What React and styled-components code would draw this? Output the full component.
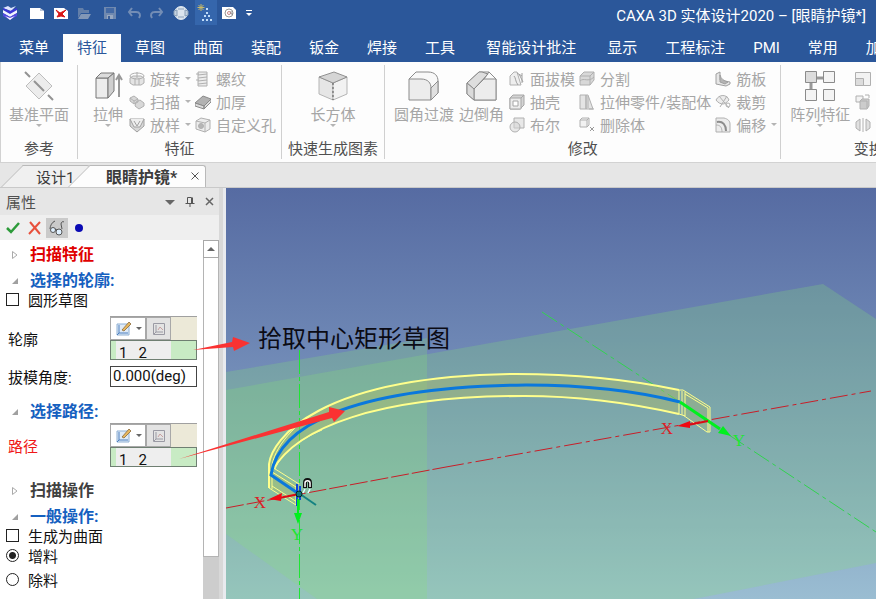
import { useState } from 'react';
import styled, { createGlobalStyle, css } from 'styled-components';

const GlobalStyle = createGlobalStyle`
    * { box-sizing: border-box; }
    html, body { margin: 0; height: 100%; overflow: hidden; }
    body, button, input {
        font-family: Roboto, "Noto Sans CJK SC", sans-serif;
        font-size: 15px;
    }
    button { padding: 0; border: none; background: none; color: inherit; white-space: nowrap; }
    svg { display: block; flex: none; }
`;

const Page = styled.div`
    display: flex;
    flex-direction: column;
    height: 100vh;
    background-color: #e6e6e6;
`;

const TitleBar = styled.header`
    display: flex;
    justify-content: space-between;
    height: 34px;
    padding: 0 10px 0 0;
    background-color: #2b579a;
    color: #fff;
`;

const QuickAccess = styled.div`
    display: flex;
    height: 25px;
`;

const QuickButton = styled.button`
    display: flex;
    align-items: center;
    justify-content: center;
    width: ${props => props.$width || 24}px;
    background-color: ${props => (props.$active ? '#3566ac' : 'transparent')};
`;

const WindowTitle = styled.h1`
    margin: 0;
    font-size: 15px;
    font-weight: 400;
    line-height: 32px;
    white-space: nowrap;
`;

const Menu = styled.nav`
    display: flex;
    height: 28px;
    padding-left: 5px;
    overflow: hidden;
    background-color: #2b579a;
    color: #fff;
`;

const MenuTab = styled.button`
    flex: none;
    padding: 0 ${props => (props.$wide ? 17 : 14)}px;
    line-height: 28px;
    ${props => props.$active && css`
        background-color: #fdfdfd;
        color: #2b579a;
    `}
`;

const Ribbon = styled.div`
    display: flex;
    flex: none;
    height: 101px;
    overflow: hidden;
    background-color: #fdfdfd;
    border-bottom: 1px solid #d2d2d2;
    border-left: 1px solid #d2d2d2;
`;

const Group = styled.section`
    display: flex;
    flex: none;
    flex-direction: column;
    min-width: ${props => props.$width}px;
    margin: 3px 0;
    border-right: 1px solid #d0d0d0;
`;

const GroupTools = styled.div`
    display: flex;
    justify-content: ${props => (props.$start ? 'flex-start' : 'center')};
    gap: 5px;
    height: 75px;
    padding: 2px 4px 0 ${props => props.$start || 4}px;
`;

const GroupName = styled.h2`
    margin: 0;
    color: #505050;
    font-size: 15px;
    font-weight: 400;
    line-height: 20px;
    text-align: center;
    white-space: nowrap;
`;

const BigTool = styled.button`
    display: flex;
    flex-direction: column;
    align-items: center;
    color: #a6a6a6;
    line-height: 18px;
    svg { margin: 3px 0 4px; }
`;

const ToolColumn = styled.div`
    display: flex;
    flex-direction: column;
    margin-right: -1px;
`;

const SmallTool = styled.button`
    display: flex;
    align-items: center;
    gap: 5px;
    height: 23px;
    color: #a6a6a6;
`;

const Caret = styled.span`
    border: 3px solid transparent;
    border-top-color: ${props => props.$color || '#b4b4b4'};
    border-bottom: none;
`;

const DocTabs = styled.div`
    display: flex;
    flex: none;
    align-items: flex-end;
    height: 25px;
    border-bottom: 1px solid #c9c9c9;
`;

const DocTab = styled.div`
    position: relative;
    display: flex;
    align-items: center;
    gap: 14px;
    height: 22px;
    margin-left: ${props => (props.$active ? -22 : 1)}px;
    padding: 0 6px 0 ${props => (props.$active ? 38 : 35)}px;
    width: ${props => (props.$active ? 138 : 89)}px;
    color: #3c3c3c;
    font-size: ${props => (props.$active ? 16 : 15)}px;
    font-weight: ${props => (props.$active ? 700 : 400)};
    white-space: nowrap;

    &::before, &::after {
        content: '';
        position: absolute;
        inset: 0;
        background-color: ${props => (props.$active ? '#fdfdfd' : '#f0f0f0')};
        border: 1px solid #b9b9b9;
        border-bottom: none;
    }
    &::before {
        right: 30px;
        border-right: none;
        transform: skewX(-45deg);
        transform-origin: bottom left;
    }
    &::after {
        left: 40px;
        border-left: none;
        border-radius: 0 3px 0 0;
    }
    > * { position: relative; z-index: 1; }
`;

const Workspace = styled.main`
    position: relative;
    display: flex;
    flex: 1;
    min-height: 0;
`;

const Panel = styled.aside`
    display: flex;
    flex: none;
    flex-direction: column;
    width: 219px;
`;

const PanelHeader = styled.div`
    display: flex;
    align-items: center;
    gap: 10px;
    height: 27px;
    padding: 0 4px 0 6px;
    color: #505050;
    h2 {
        flex: 1;
        margin: 0;
        font-size: 15px;
        font-weight: 400;
    }
`;

const PanelActions = styled.div`
    display: flex;
    align-items: center;
    height: 25px;
    padding-left: 2px;
    background-color: #efefef;
`;

const ActionButton = styled.button`
    display: flex;
    align-items: center;
    justify-content: center;
    width: 22px;
    height: 20px;
    background-color: ${props => (props.$active ? '#cacaca' : 'transparent')};
`;

const PanelBody = styled.div`
    display: flex;
    flex: 1;
    min-height: 0;
    background-color: #fff;
`;

const Properties = styled.form`
    flex: 1;
    padding-top: 1px;
    overflow: hidden;
`;

const Section = styled.section`
    margin-bottom: ${props => (props.$open ? 7 : 2)}px;
`;

const SectionHeader = styled.button`
    display: flex;
    align-items: center;
    gap: 11px;
    height: 24px;
    padding: 4px 0 0 11px;
    color: ${props => props.$color};
    font-size: 16px;
    font-weight: 700;
    line-height: 20px;
`;

const CheckRow = styled.label`
    display: flex;
    align-items: center;
    gap: 9px;
    height: ${props => props.$height || 16}px;
    padding-left: 6px;
    color: #111;

    input {
        appearance: none;
        width: 13px;
        height: 13px;
        margin: 0;
        border: 1px solid #222;
        background-color: #fff;
    }
    input[type='radio'] { border-radius: 50%; }
    input[type='radio']:checked {
        background-image: radial-gradient(circle, #222 3px, transparent 4px);
    }
`;

const Fields = styled.div`
    padding-top: ${props => (props.$spaced ? 8 : 0)}px;
`;

const FieldRow = styled.div`
    display: flex;
    align-items: center;
    justify-content: space-between;
    height: ${props => props.$height}px;
    padding: 0 6px 2px 8px;
    color: ${props => (props.$missing ? '#f01818' : '#111')};
    input {
        width: 87px;
        height: 21px;
        padding: 0 2px;
        border: 1px solid #444;
        color: #111;
    }
`;

const Picker = styled.div`
    width: 87px;
    color: #111;
`;

const PickerTools = styled.div`
    display: flex;
    height: 24px;
    background-color: #ece9d8;
    border-top: 1px solid #a0a0a0;
`;

const PickerButton = styled.button`
    display: flex;
    align-items: center;
    justify-content: center;
    gap: 5px;
    width: ${props => (props.$plain ? 25 : 36)}px;
    background-color: ${props => (props.$plain ? '#e3e3e3' : '#fff')};
    border: 1px solid #a8a8a8;
`;

const PickerList = styled.div`
    height: 20px;
    padding: 0 25px 0 5px;
    overflow: hidden;
    background-color: #c8ebc4;
    border: 1px solid #6f7f72;
    span {
        display: block;
        padding: 4px 0 0 3px;
        background-color: #eee;
        line-height: 17px;
        white-space: pre;
    }
`;

const ScrollTrack = styled.div`
    display: flex;
    flex-direction: column;
    width: 16px;
    padding-bottom: 42px;
    background-color: #cdcdcd;
`;

const ScrollButton = styled.button`
    display: flex;
    align-items: center;
    justify-content: center;
    height: 18px;
    background-color: #fff;
    border: 1px solid #a8a8a8;
`;

const ScrollThumb = styled.div`
    flex: 1;
    background-color: #fff;
    border: 1px solid #b4b4b4;
    border-top: none;
`;

const Splitter = styled.div`
    width: 7px;
    background-color: #d8d8d8;
    border-right: 3px solid #e8eaee;
`;

const Viewport = styled.div`
    flex: 1;
    min-width: 0;
    background: linear-gradient(#566ba2, #6d86b4 37%, #84a2c3 70%, #9abdd2);
    svg { width: 100%; height: 100%; }
`;

const Pointers = styled.svg`
    position: absolute;
    top: 0;
    left: 0;
    pointer-events: none;
`;

const Note = styled.p`
    position: absolute;
    top: 136px;
    left: 258px;
    margin: 0;
    color: #0b0b14;
    font-size: 24px;
    line-height: 30px;
    white-space: nowrap;
`;

const Svg = ({ size = 16, children, ...rest }) => (
    <svg width={size} height={size} viewBox={`0 0 ${size} ${size}`} fill="none" stroke="#b0b0b0" {...rest}>
        {children}
    </svg>
);

const quickIcons = [
    {
        name: 'CAXA', width: 20, icon: (
            <Svg stroke="none">
                <path d="M1 3l5-2 3 2 5-2-5 5z" fill="#dfe4ff" />
                <path d="M1 3l7 3 7-3v2l-7 4-7-4z" fill="#3d35d8" />
                <path d="M1 5l7 4 7-4v3l-7 4-7-4z" fill="#f2f4ff" />
                <path d="M1 8l7 4 7-4v3l-7 4-7-4z" fill="#5148e0" />
                <path d="M3 11l5 2 5-2-5 4z" fill="#fff" />
            </Svg>
        ),
    },
    { name: '新建', width: 33, icon: <Svg stroke="none"><path d="M1 3h10l4 3v8H1z" fill="#fff" /><path d="M11 3v3h4z" fill="#b8c4d8" /></Svg> },
    {
        name: '关闭', width: 16, icon: (
            <Svg stroke="none">
                <path d="M1 3h10l4 3v8H1z" fill="#fff" />
                <path d="M3 5l4 3 6-3-4 4 3 3-4-1-4 1 2-3z" fill="#d81818" stroke="#d81818" />
            </Svg>
        ),
    },
    { name: '打开', width: 30, icon: <Svg stroke="none"><path d="M2 3h5l1 2h5v3H5l-3 5z" fill="#637fa9" /><path d="M5 9h10l-3 5H2z" fill="#8297b6" /></Svg> },
    { name: '保存', width: 22, icon: <Svg stroke="none"><path d="M2 2h12v12H2z" fill="#7089af" /><path d="M4 3h8v5H4z" fill="#4369a4" /><path d="M5 10h6v4H5z" fill="#98a8c0" /><path d="M6 11h2v3H6z" fill="#3b5f99" /></Svg> },
    { name: '撤销', width: 26, icon: <Svg stroke="#738db5" strokeWidth="2"><path d="M6 3L3 7l3 4M3 7h7c4 0 5 3 3 6" /></Svg> },
    { name: '重做', width: 20, icon: <Svg stroke="#738db5" strokeWidth="2"><path d="M10 3l3 4-3 4M13 7H6c-4 0-5 3-3 6" /></Svg> },
    {
        name: '显示设置', width: 28, icon: (
            <Svg stroke="#8aa0b8">
                <circle cx="8" cy="8" r="6.5" fill="#dce5ee" stroke="#dce5ee" />
                <path d="M1 6l3-1v6l-3-1zM15 6l-3-1v6l3-1zM5 4h6M5 12h6" fill="#c4d2e0" />
            </Svg>
        ),
    },
    {
        name: '三维球', width: 22, active: true, icon: (
            <Svg size={18} stroke="none">
                <path d="M4 0v7M.5 3.5h7M1.5 1l5 5M6.500 1l-5 5" stroke="#c8b968" />
                <path d="M9 4h2v2H9zM9 8h2v2H9zM7 11h2v2H7zM11 11h2v2h-2zM5 15h2v2H5zM9 15h2v2H9zM13 15h2v2h-2z" fill="#c0dcf8" />
            </Svg>
        ),
    },
    {
        name: '零件属性', width: 24, icon: (
            <Svg stroke="#7a7a7a">
                <path d="M1 2h11l3 3v9H1z" fill="#fff" stroke="none" />
                <circle cx="8" cy="8" r="4" strokeWidth=".8" />
                <circle cx="8" cy="8" r="1.5" stroke="#c88" />
                <path d="M10 6v3h2" strokeWidth=".8" />
            </Svg>
        ),
    },
    { name: '更多', width: 16, icon: <Svg size={8} stroke="#fff"><path d="M1 1.500h6" /><path d="M1 4h6L4 7z" fill="#fff" stroke="none" /></Svg> },
];

const menuItems = ['菜单', '特征', '草图', '曲面', '装配', '钣金', '焊接', '工具', '智能设计批注', '显示', '工程标注', 'PMI', '常用', '加载应用程序'];

const bigIcons = {
    plane: (
        <Svg size={32} stroke="#bdbdbd">
            <path d="M16 3l13 13-13 13L3 16z" fill="#ececec" />
            <path d="M11 11l10 10M2 2l5 5M25 25l5 5" stroke="#939393" strokeWidth="2" />
        </Svg>
    ),
    extrude: (
        <Svg size={32} stroke="#777">
            <path d="M4 8h12v20H4z" fill="#ececec" />
            <path d="M4 8l5-5h13l-6 5z" fill="#dcdcdc" />
            <path d="M16 8l6-5v18l-6 7z" fill="#cfcfcf" />
            <path d="M27 27V6M24 10l3-5 3 5" stroke="#999" strokeWidth="2" />
        </Svg>
    ),
    box: (
        <Svg size={32} stroke="#b5b5b5">
            <path d="M2 7l14 6v17L2 24z" fill="#e6e6e6" />
            <path d="M30 7l-14 6v17l14-6z" fill="#f2f2f2" />
            <path d="M2 7l15-5 13 5-14 6z" fill="#d5d5d5" stroke="#909090" />
            <path d="M16 13v17" stroke="#555" strokeDasharray="2 2" />
        </Svg>
    ),
    fillet: (
        <Svg size={32} stroke="#8b8b8b">
            <path d="M1 9l7-7h12c7 0 10 4 10 9v12l-7 7" fill="#f8f8f8" />
            <path d="M1 30V9h12c7 0 10 4 10 9v12z" fill="#ececec" />
            <path d="M23 18l7-7v12l-7 7z" fill="#e0e0e0" />
        </Svg>
    ),
    chamfer: (
        <Svg size={32} stroke="#8b8b8b">
            <path d="M1 13L13 2h10l7 7v21H8l-7-6z" fill="#fafafa" />
            <path d="M1 13L13 2l3 0 6 2L8 19z" fill="#dedede" />
            <path d="M8 30V19l10-10h12v21z" fill="#ececec" />
            <path d="M1 13l7 6v11l-7-6z" fill="#dadada" />
            <path d="M18 9l5-7" />
        </Svg>
    ),
    pattern: (
        <Svg size={32} stroke="#8b8b8b">
            <path d="M12 8h8M7 12v8" stroke="#999" strokeWidth="3" />
            <path d="M1.5 1.5h11v11h-11z" fill="#dcdcdc" />
            <path d="M19.5 1.5h11v11h-11zM1.5 19.5h11v11h-11zM19.5 19.5h11v11h-11z" fill="#f4f4f4" />
        </Svg>
    ),
};

const smallIcons = {
    revolve: <Svg><path d="M1 7l3-2h8l3 2v5l-3 2H4l-3-2zM6 7v7M10 7v7" fill="#e4e4e4" /><ellipse cx="8" cy="5" rx="7" ry="3" /><path d="M8 1v6" /></Svg>,
    sweep: <Svg><path d="M1 4l4-2 4 3v3l-4 2-4-3zM7 8l4-2 4 3v3l-5 3-4-3z" fill="#d8d8d8" /><path d="M1 4l4 3 4-2M5 7v3" /></Svg>,
    loft: <Svg stroke="#a0a0a0"><path d="M1 2h14v7l-7 6-7-6z" fill="#d8d8d8" /><path d="M1 2l4 8h6l4-8M5 4l3 5 3-5" fill="#eee" /></Svg>,
    thread: <Svg><path d="M3 1h9v14H3z" fill="#ececec" /><path d="M3 4l9-1M3 7l9-1M3 10l9-1M3 13l9-1M1 3h3M1 9h3" /></Svg>,
    thicken: <Svg stroke="#8a8a8a"><path d="M0 9l8-7 8 3-7 7z" fill="#b2b2b2" /><path d="M0 9l9 3v3l-9-3zM9 12l7-7v3l-7 7z" fill="#dcdcdc" /></Svg>,
    hole: <Svg><path d="M1 4l5-3 9 2v9l-5 3-9-3z" fill="#ececec" /><path d="M1 4l9 2v9M10 6l5-3" /><circle cx="6" cy="9" r="2.5" fill="#b5b5b5" /></Svg>,
    draft: <Svg><path d="M1 5l4-4h3l4 13H1z" fill="#eee" /><path d="M5 5c2 2 1 5 4 9M8 2l5 3v7M13 5V2M10 3l4 8" stroke="#a0a0a0" /></Svg>,
    shell: <Svg stroke="#a6a6a6"><path d="M1 4l3-3h11v10l-4 4H1z" fill="#d4d4d4" /><path d="M1 4h11v11H1zM12 4l3-3" fill="#ececec" /><path d="M4 7h5v5H4z" fill="#fff" /></Svg>,
    bool: <Svg><path d="M5 1h10v10H5z" fill="#e8e8e8" /><circle cx="6" cy="10" r="5" fill="#d5d5d588" /></Svg>,
    split: <Svg><path d="M1 5l4-4h10v8l-4 5H1z" fill="#d8d8d8" /><path d="M1 5h10v9M11 5l4-4M1 10c4-4 8 2 14-4" /></Svg>,
    stretch: <Svg><path d="M1 1h6v14H1zM7 1h2l5 14H7z" fill="#e4e4e4" /><path d="M9 2v12M10 15h5" /></Svg>,
    remove: <Svg><path d="M1 3l2-2h7v7l-2 2H1zM1 3h7v7M8 3l2-2" fill="#f2f2f2" /><path d="M11 10l4 4M15 10l-4 4" stroke="#999" /></Svg>,
    rib: <Svg stroke="#a0a0a0"><path d="M1 3l4-2v8l10 2v2l-4 2-10-2z" fill="#e6e6e6" /><path d="M5 4c1 4 4 6 8 7l-3 2-5-2z" fill="#b4b4b4" /></Svg>,
    trim: <Svg><path d="M1 6c3-6 11-6 13 0-2 2-4 4-6 4s-5-1-7-4z" fill="#ececec" /><path d="M4 2l10 12M12 2L5 13" /><circle cx="13" cy="11" r="2" /></Svg>,
    offset: <Svg><path d="M1 1h8c4 1 6 3 6 6v8H1z" fill="#ececec" /><path d="M2 5c6-1 9 3 9 9" stroke="#8c8c8c" strokeWidth="2" /><path d="M1 8c4 0 6 2 6 7" /></Svg>,
    scale: <Svg><path d="M.5 1.5h15v13H.5z" fill="#f2f2f2" /><path d="M.5 7.5h8v7h-8z" fill="#dcdcdc" /></Svg>,
    copy: <Svg><path d="M1 2h7v6H1z" fill="#f2f2f2" /><path d="M5 7l2-2h7v7l-2 3H5z" fill="#ccc" /><path d="M10 1h4v3M5 7h7v7" /></Svg>,
    mirror: <Svg><path d="M5 2L1 5v6l4 3zM8 1v14M11 2l4 3v6l-4 3z" fill="#e0e0e0" /></Svg>,
};

const Big = ({ icon, label, caret }) => (
    <BigTool>
        {bigIcons[icon]}
        {label}
        {caret && <Caret />}
    </BigTool>
);

// each tool is [icon, label, has a drop-down]
const Column = ({ tools }) => (
    <ToolColumn>
        {tools.map(([icon, label, caret]) => (
            <SmallTool key={icon} aria-label={label || icon}>
                {smallIcons[icon]}
                {label}
                {caret && <Caret />}
            </SmallTool>
        ))}
    </ToolColumn>
);

const RibbonBar = () => (
    <Ribbon>
        <Group $width={77}>
            <GroupTools><Big icon="plane" label="基准平面" caret /></GroupTools>
            <GroupName>参考</GroupName>
        </Group>
        <Group $width={204}>
            <GroupTools $start={14}>
                <Big icon="extrude" label="拉伸" caret />
                <Column tools={[['revolve', '旋转', true], ['sweep', '扫描', true], ['loft', '放样', true]]} />
                <Column tools={[['thread', '螺纹'], ['thicken', '加厚'], ['hole', '自定义孔']]} />
            </GroupTools>
            <GroupName>特征</GroupName>
        </Group>
        <Group $width={103}>
            <GroupTools><Big icon="box" label="长方体" caret /></GroupTools>
            <GroupName>快速生成图素</GroupName>
        </Group>
        <Group $width={396}>
            <GroupTools $start={9}>
                <Big icon="fillet" label="圆角过渡" />
                <Big icon="chamfer" label="边倒角" />
                <Column tools={[['draft', '面拔模'], ['shell', '抽壳'], ['bool', '布尔']]} />
                <Column tools={[['split', '分割'], ['stretch', '拉伸零件/装配体'], ['remove', '删除体']]} />
                <Column tools={[['rib', '筋板'], ['trim', '裁剪'], ['offset', '偏移', true]]} />
            </GroupTools>
            <GroupName>修改</GroupName>
        </Group>
        <Group $width={176}>
            <GroupTools $start={9}>
                <Big icon="pattern" label="阵列特征" caret />
                <Column tools={[['scale'], ['copy'], ['mirror']]} />
            </GroupTools>
            <GroupName>变换</GroupName>
        </Group>
    </Ribbon>
);

const Toggle = ({ open }) => (
    <Svg size={8} stroke="#aaa">
        {open ? <path d="M7 1v6H1z" fill="#a0a0a0" stroke="none" /> : <path d="M1.5 .5L6 4 1.5 7.500z" />}
    </Svg>
);

const SketchPicker = ({ label }) => (
    <Picker role="group" aria-label={label}>
        <PickerTools>
            <PickerButton type="button" aria-label="创建草图">
                <Svg stroke="#4a7fc0">
                    <path d="M2 3h12v11H2z" fill="#dfeaf6" stroke="#8fb0d4" />
                    <path d="M4 4v8h9M4 12l-2 2" />
                    <path d="M7 9l7-8 2 2-7 7z" fill="#e8b860" stroke="#8a6a3a" strokeWidth=".8" />
                </Svg>
                <Caret $color="#666" />
            </PickerButton>
            <PickerButton type="button" aria-label="编辑草图" $plain>
                <Svg stroke="#9a9aa4"><path d="M2.5 2.5h11v11h-11zM5 4v7h7M3 13l2-2" /><path d="M7 9l2-3 3 3" stroke="#c8a0a0" /></Svg>
            </PickerButton>
        </PickerTools>
        <PickerList><span>1   2</span></PickerList>
    </Picker>
);

const PropertyPanel = () => {
    const [circular, setCircular] = useState(false);
    const [surface, setSurface] = useState(false);
    const [mode, setMode] = useState('add');
    const [angle, setAngle] = useState('0.000(deg)');

    return (
        <Panel>
            <PanelHeader>
                <h2>属性</h2>
                <button aria-label="选项"><Svg size={10} stroke="none"><path d="M0 3h10L5 8z" fill="#666" /></Svg></button>
                <button aria-label="固定"><Svg size={10} stroke="#555"><path d="M2.5 6V.5h4V6M7.500 .5V6M.5 6.500h9M5 6v4" /></Svg></button>
                <button aria-label="关闭"><Svg size={10} stroke="#666" strokeWidth="1.5"><path d="M1 1l7 7M8 1L1 8" /></Svg></button>
            </PanelHeader>
            <PanelActions>
                <ActionButton aria-label="确定"><Svg stroke="#2d9b3a" strokeWidth="2.5"><path d="M2 8l4 4 8-9" /></Svg></ActionButton>
                <ActionButton aria-label="取消"><Svg stroke="#e8503c" strokeWidth="2"><path d="M3 2l10 12M13 2L2 14" /></Svg></ActionButton>
                <ActionButton aria-label="预览" $active>
                    <Svg stroke="#555">
                        <path d="M6 1C3 2 1 6 1 9M15 2c-1-1-3 0-3 2l1 5" />
                        <circle cx="4" cy="10" r="2.5" fill="#dff0ff" /><circle cx="10" cy="12" r="3" fill="#dff0ff" /><path d="M6 9l2 1" />
                    </Svg>
                </ActionButton>
                <ActionButton aria-label="应用"><Svg stroke="none"><circle cx="8" cy="8" r="4" fill="#0a0ab4" /></Svg></ActionButton>
            </PanelActions>
            <PanelBody>
                <Properties>
                    <Section>
                        <SectionHeader type="button" $color="#e00000"><Toggle />扫描特征</SectionHeader>
                    </Section>
                    <Section $open>
                        <SectionHeader type="button" $color="#1560c0"><Toggle open />选择的轮廓:</SectionHeader>
                        <CheckRow>
                            <input type="checkbox" checked={circular} onChange={() => setCircular(!circular)} />
                            圆形草图
                        </CheckRow>
                        <Fields $spaced>
                            <FieldRow $height={48}>轮廓<SketchPicker label="轮廓" /></FieldRow>
                            <FieldRow $height={28}>
                                <label htmlFor="angle">拔模角度:</label>
                                <input id="angle" value={angle} onChange={e => setAngle(e.target.value)} />
                            </FieldRow>
                        </Fields>
                    </Section>
                    <Section $open>
                        <SectionHeader type="button" $color="#1560c0"><Toggle open />选择路径:</SectionHeader>
                        <FieldRow $height={48} $missing>路径<SketchPicker label="路径" /></FieldRow>
                    </Section>
                    <Section>
                        <SectionHeader type="button" $color="#404040"><Toggle />扫描操作</SectionHeader>
                    </Section>
                    <Section $open>
                        <SectionHeader type="button" $color="#1560c0"><Toggle open />一般操作:</SectionHeader>
                        <CheckRow>
                            <input type="checkbox" checked={surface} onChange={() => setSurface(!surface)} />
                            生成为曲面
                        </CheckRow>
                        <CheckRow $height={24}>
                            <input type="radio" name="mode" checked={mode === 'add'} onChange={() => setMode('add')} />
                            增料
                        </CheckRow>
                        <CheckRow $height={24}>
                            <input type="radio" name="mode" checked={mode === 'cut'} onChange={() => setMode('cut')} />
                            除料
                        </CheckRow>
                    </Section>
                </Properties>
                <ScrollTrack>
                    <ScrollButton aria-label="向上滚动"><Svg size={8} stroke="none"><path d="M0 6h8L4 2z" fill="#666" /></Svg></ScrollButton>
                    <ScrollThumb />
                </ScrollTrack>
            </PanelBody>
        </Panel>
    );
};

const Scene = () => (
    <svg viewBox="0 0 650 411" preserveAspectRatio="xMinYMin slice" fill="none">
        {/* reference planes */}
        <g fill="#89de76" fillOpacity=".25">
            <path d="M0 202L597 96l53 35v244l-182 36H91L0 346z" />
            <path d="M0 184l201-34v261H0z" />
        </g>

        {/* axes */}
        <path d="M0 320L220 279" stroke="#c81e28" strokeDasharray="18 3" />
        <path d="M220 279L645 203" stroke="#c81e28" strokeDasharray="18 4 4 4" />
        <path d="M73.5 162V411" stroke="#1ee632" strokeDasharray="24 3 4 3" />
        <path d="M316 124L454 214M503 247L650 344" stroke="#32d250" strokeDasharray="18 4 4 4" />

        {/* swept body preview */}
        <path d="M43 276C46 252 90 188 290 186 350 186 410 193 453 202V226C400 214 350 208 298 208 150 208 70 240 46 283L73 298V317L43 300z" fill="#b4be64" fillOpacity=".4" />
        <path d="M457 202l27 18v24l-27-18z" fill="#b4be64" fillOpacity=".3" />
        <g stroke="#ffff8c">
            <path d="M43 300V276C46 252 90 188 290 186 350 186 410 193 453 202" strokeWidth="2" />
            <path d="M46 301V277C50 255 75 230 100 219" />
            <path d="M46 283C70 240 150 208 298 208 350 208 400 214 453 226" strokeWidth="2" />
            <path d="M49 281C55 266 74 251 96 242" />
            <path d="M46 279l27 17M43 282l27 17M43 300l27 17M46 298l25 16M70 298v19" />
            <path d="M453 202v24M456 203v24M459 204v24M453 202h4l27 17v25h-3l-24-17M459 206l23 14v24M453 226l6 2" />
        </g>
        <path d="M73 306L45 287C52 240 120 199 300 197 360 197 415 204 454 214" stroke="#0a78dc" strokeWidth="3" />

        {/* left origin */}
        <path d="M71 296v22M74 298v14" stroke="#0a46dc" strokeWidth="2" />
        <path d="M74 306l16 11" stroke="#148282" strokeWidth="2" />
        <path d="M73 306l-20 4" stroke="#dc0a14" strokeWidth="2" />
        <path d="M43 311l13-6-1 8z" fill="#f00a14" />
        <path d="M72 311v15" stroke="#00f01e" strokeWidth="2" />
        <path d="M68 325h8l-4 11z" fill="#00f01e" />
        <circle cx="73" cy="306" r="3" fill="#147878" stroke="#052828" />
        <path d="M79 300v-5c0-4 5-4 5 0v5" stroke="#111" strokeWidth="4" />
        <path d="M79 299v-4c0-3 5-3 5 0v4" stroke="#fff" strokeWidth="1.5" />
        <path d="M79 301l-2 4M84 301l-2 4" stroke="#dfffff" strokeWidth="1.5" />

        {/* right origin */}
        <path d="M454 214l40 27" stroke="#00f01e" strokeWidth="3" />
        <path d="M505 248l-13-3 5-7z" fill="#00f01e" />
        <path d="M482 233l-20 4" stroke="#dc0a14" strokeWidth="2" />
        <path d="M451 238l13-5v7z" fill="#f00a14" />

        <g fontFamily="Liberation Serif, serif" fontSize="17" textAnchor="middle">
            <text x="34" y="320" fill="#dc1e28">X</text>
            <text x="441" y="246" fill="#dc1e28">X</text>
            <text x="71" y="352" fill="#1ee632">Y</text>
            <text x="513" y="258" fill="#1ee632">Y</text>
        </g>
    </svg>
);

export default function App() {
    return (
        <Page>
            <GlobalStyle />
            <TitleBar>
                <QuickAccess>
                    {quickIcons.map(({ name, width, active, icon }) => (
                        <QuickButton key={name} aria-label={name} $width={width} $active={active}>{icon}</QuickButton>
                    ))}
                </QuickAccess>
                <WindowTitle>CAXA 3D 实体设计2020 – [眼睛护镜*]</WindowTitle>
            </TitleBar>
            <Menu>
                {menuItems.map(item => (
                    <MenuTab key={item} $active={item === '特征'} $wide={item === '智能设计批注'}>{item}</MenuTab>
                ))}
            </Menu>
            <RibbonBar />
            <DocTabs>
                <DocTab><span>设计1</span></DocTab>
                <DocTab $active>
                    <span>眼睛护镜*</span>
                    <button aria-label="关闭文档"><Svg size={8} stroke="#555"><path d="M.5 .5l7 7M7.500 .5l-7 7" /></Svg></button>
                </DocTab>
            </DocTabs>
            <Workspace>
                <PropertyPanel />
                <Splitter />
                <Viewport><Scene /></Viewport>
                <Pointers width="360" height="300" fill="#fa3232">
                    <path d="M193 162l39-8 1-5 17 6-16 8-1-4z" />
                    <path d="M179 271l150-47 0-5 16 4-11 11-2-4z" />
                </Pointers>
                <Note>拾取中心矩形草图</Note>
            </Workspace>
        </Page>
    );
}
